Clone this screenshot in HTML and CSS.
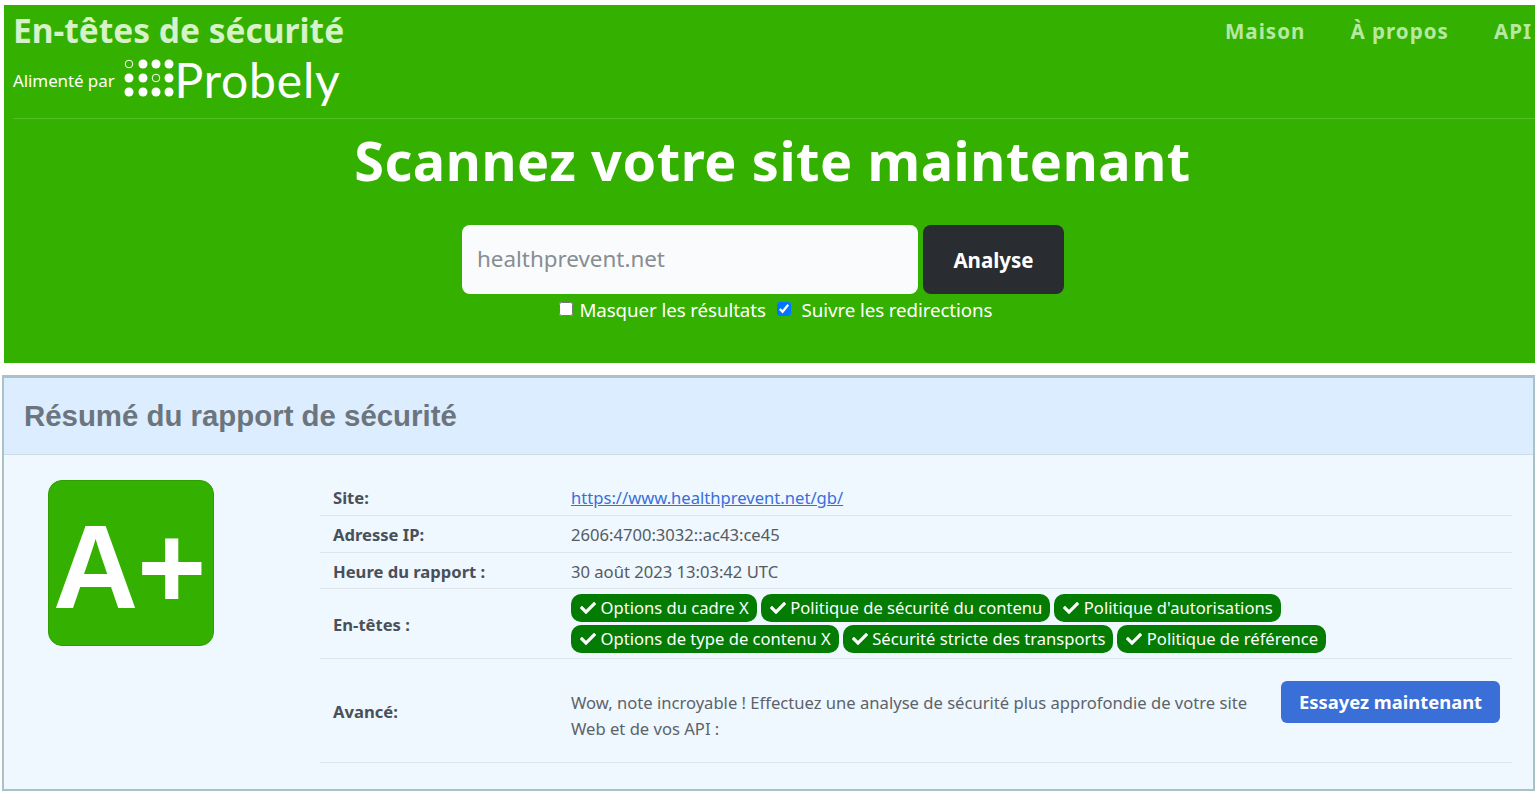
FILE: index.html
```html
<!DOCTYPE html>
<html lang="fr">
<head>
<meta charset="utf-8">
<title>En-têtes de sécurité</title>
<link rel="stylesheet" href="styles.css">
</head>
<body>
<header class="hero">
  <div class="topbar">
    <div class="brand">
      <div class="brand-title">En-têtes de sécurité</div>
      <div class="brand-sub">
        <span class="powered">Alimenté par</span>
        <svg class="dots" viewBox="0 0 50 38" width="50" height="38" aria-hidden="true">
          <g fill="#fff">
            <circle cx="19" cy="5" r="4.5"/><circle cx="32" cy="5" r="4.5"/><circle cx="45" cy="5" r="4.5"/>
            <circle cx="5" cy="19" r="4.5"/><circle cx="19" cy="19" r="4.5"/><circle cx="45" cy="19" r="4.5"/>
            <circle cx="5" cy="33" r="4.5"/><circle cx="19" cy="33" r="4.5"/><circle cx="32" cy="33" r="4.5"/><circle cx="45" cy="33" r="4.5"/>
          </g>
          <g fill="none" stroke="#fff" stroke-width="1">
            <circle cx="5" cy="5" r="3.8"/><circle cx="32" cy="19" r="3.8"/>
          </g>
        </svg>
        <span class="probely">Probely</span>
      </div>
    </div>
    <nav class="nav">
      <a href="#">Maison</a>
      <a href="#">À propos</a>
      <a href="#">API</a>
    </nav>
  </div>
  <h1 class="headline">Scannez votre site maintenant</h1>
  <form class="scan">
    <div class="scan-row">
      <input class="scan-input" type="text" placeholder="healthprevent.net">
      <button class="scan-btn" type="button">Analyse</button>
    </div>
    <div class="scan-opts">
      <label class="opt"><input type="checkbox"> Masquer les résultats</label>
      <label class="opt opt-follow"><input type="checkbox" checked> Suivre les redirections</label>
    </div>
  </form>
</header>

<section class="card">
  <h2 class="card-head">Résumé du rapport de sécurité</h2>
  <div class="card-body">
    <div class="grade-col">
      <div class="grade">A+</div>
    </div>
    <table class="info">
      <tr class="row-site"><th>Site:</th><td><a href="#">https://www.healthprevent.net/gb/</a></td></tr>
      <tr class="row-ip"><th>Adresse IP:</th><td>2606:4700:3032::ac43:ce45</td></tr>
      <tr class="row-time"><th>Heure du rapport :</th><td>30 août 2023 13:03:42 UTC</td></tr>
      <tr class="row-pills"><th>En-têtes :</th><td>
        <div class="pills">
          <span class="pill"><svg class="tick" viewBox="0 0 512 512"><path d="M173.898 439.404l-166.4-166.4c-9.997-9.997-9.997-26.206 0-36.204l36.203-36.204c9.997-9.998 26.207-9.998 36.204 0L192 312.69 432.095 72.596c9.997-9.997 26.207-9.997 36.204 0l36.203 36.204c9.997 9.997 9.997 26.206 0 36.204l-294.4 294.401c-9.998 9.997-26.207 9.997-36.204-.001z"/></svg>Options du cadre X</span>
          <span class="pill"><svg class="tick" viewBox="0 0 512 512"><path d="M173.898 439.404l-166.4-166.4c-9.997-9.997-9.997-26.206 0-36.204l36.203-36.204c9.997-9.998 26.207-9.998 36.204 0L192 312.69 432.095 72.596c9.997-9.997 26.207-9.997 36.204 0l36.203 36.204c9.997 9.997 9.997 26.206 0 36.204l-294.4 294.401c-9.998 9.997-26.207 9.997-36.204-.001z"/></svg>Politique de sécurité du contenu</span>
          <span class="pill"><svg class="tick" viewBox="0 0 512 512"><path d="M173.898 439.404l-166.4-166.4c-9.997-9.997-9.997-26.206 0-36.204l36.203-36.204c9.997-9.998 26.207-9.998 36.204 0L192 312.69 432.095 72.596c9.997-9.997 26.207-9.997 36.204 0l36.203 36.204c9.997 9.997 9.997 26.206 0 36.204l-294.4 294.401c-9.998 9.997-26.207 9.997-36.204-.001z"/></svg>Politique d'autorisations</span>
          <span class="pill"><svg class="tick" viewBox="0 0 512 512"><path d="M173.898 439.404l-166.4-166.4c-9.997-9.997-9.997-26.206 0-36.204l36.203-36.204c9.997-9.998 26.207-9.998 36.204 0L192 312.69 432.095 72.596c9.997-9.997 26.207-9.997 36.204 0l36.203 36.204c9.997 9.997 9.997 26.206 0 36.204l-294.4 294.401c-9.998 9.997-26.207 9.997-36.204-.001z"/></svg>Options de type de contenu X</span>
          <span class="pill"><svg class="tick" viewBox="0 0 512 512"><path d="M173.898 439.404l-166.4-166.4c-9.997-9.997-9.997-26.206 0-36.204l36.203-36.204c9.997-9.998 26.207-9.998 36.204 0L192 312.69 432.095 72.596c9.997-9.997 26.207-9.997 36.204 0l36.203 36.204c9.997 9.997 9.997 26.206 0 36.204l-294.4 294.401c-9.998 9.997-26.207 9.997-36.204-.001z"/></svg>Sécurité stricte des transports</span>
          <span class="pill"><svg class="tick" viewBox="0 0 512 512"><path d="M173.898 439.404l-166.4-166.4c-9.997-9.997-9.997-26.206 0-36.204l36.203-36.204c9.997-9.998 26.207-9.998 36.204 0L192 312.69 432.095 72.596c9.997-9.997 26.207-9.997 36.204 0l36.203 36.204c9.997 9.997 9.997 26.206 0 36.204l-294.4 294.401c-9.998 9.997-26.207 9.997-36.204-.001z"/></svg>Politique de référence</span>
        </div>
      </td></tr>
      <tr class="row-adv"><th>Avancé:</th><td>
        <div class="adv">
          <p class="adv-text">Wow, note incroyable ! Effectuez une analyse de sécurité plus approfondie de votre site Web et de vos API :</p>
          <a class="try" href="#">Essayez maintenant</a>
        </div>
      </td></tr>
    </table>
  </div>
</section>
</body>
</html>
```
FILE: styles.css
```css
* { box-sizing: border-box; }
html, body { margin: 0; height: 793px; overflow: hidden; }
body {
  padding: 5px 5px 0 2px;
  background: #fff;
  font-family: "Noto Sans", sans-serif;
  font-size: 16.6px;
  color: #555b62;
}
.hero {
  margin-left: 2px;
  width: 1531px;
  height: 358px;
  background: #34b000;
  padding: 0 0 0 9px;
}
.topbar {
  display: flex;
  justify-content: space-between;
  height: 114px;
  border-bottom: 1px solid #54bd2a;
}
.brand-title {
  font-size: 33.5px;
  font-weight: 700;
  line-height: 50px;
  color: #d6f2c9;
}
.brand-sub {
  display: flex;
  align-items: center;
  height: 50px;
}
.powered {
  font-size: 17px;
  color: #fff;
  margin-right: 9px;
  letter-spacing: -0.1px;
}
.dots { flex: none; margin-top: -5px; }
.probely {
  font-family: "Lato", sans-serif;
  font-weight: 400;
  font-size: 48px;
  line-height: 50px;
  color: #fff;
  margin-left: 1px;
  margin-top: -1px;
  letter-spacing: 0.8px;
}
.nav {
  display: flex;
  gap: 45px;
  padding: 10px 3px 0 0;
  align-items: flex-start;
}
.nav a {
  font-size: 20.6px;
  font-weight: 700;
  line-height: 32px;
  letter-spacing: 1px;
  text-decoration: none;
  color: #b6e8a1;
}
.headline {
  margin: 9px 0 0;
  text-align: center;
  font-size: 54px;
  line-height: 64px;
  font-weight: 700;
  letter-spacing: 0.55px;
  color: #fff;
  padding-right: 3px;
}
.scan { margin-top: 33px; }
.scan-row {
  display: flex;
  justify-content: center;
  gap: 5px;
  padding-right: 22px;
}
.scan-input {
  width: 456px;
  height: 69px;
  border: 0;
  border-radius: 8px;
  background: #fafbfc;
  padding: 0 15px 3px;
  font: 400 22.4px "Noto Sans", sans-serif;
  color: #6c757d;
}
.scan-input::placeholder { color: #878d93; opacity: 1; }
.scan-btn {
  width: 141px;
  height: 69px;
  border: 0;
  border-radius: 8px;
  background: #292c30;
  color: #fff;
  padding-bottom: 1px;
  font: 700 20.5px "Noto Sans", sans-serif;
}
.scan-opts {
  display: flex;
  justify-content: center;
  gap: 11px;
  margin-top: 1px;
  padding-left: 3px;
  color: #fff;
  font-size: 18.75px;
  line-height: 30px;
  letter-spacing: -0.1px;
}
.opt input {
  width: 14px;
  height: 14px;
  margin: 0 2px 0 0;
  position: relative;
  top: -1px;
}
.opt-follow input { margin-right: 6px; }
.card {
  margin-top: 12px;
  width: 1533px;
  height: 416px;
  border: 2px solid #a9c1c9;
  border-top-width: 3px;
  background: #eff7ff;
}
.card-head {
  margin: 0;
  height: 77px;
  padding: 0 20px;
  background: #dbedff;
  border-bottom: 1px solid #cddbe6;
  font-family: "Liberation Sans", sans-serif;
  font-size: 29.4px;
  font-weight: 700;
  line-height: 75px;
  color: #6c757d;
}
.card-body {
  display: flex;
  padding: 0 21px 0 0;
}
.grade-col {
  flex: none;
  width: 316px;
  padding: 25px 0 0 44px;
}
.grade {
  width: 166px;
  height: 166px;
  background: #34b000;
  border: 1px solid #2e9e02;
  border-radius: 14px;
  color: #fff;
  font-family: "Liberation Sans", sans-serif;
  font-weight: 700;
  font-size: 118px;
  line-height: 173px;
  text-align: center;
  letter-spacing: -1px;
  white-space: nowrap;
  padding-right: 4px;
}
.info {
  flex: 1;
  border-collapse: collapse;
  margin-top: 25px;
  align-self: flex-start;
  line-height: 26px;
}
.info th, .info td {
  border-bottom: 1px solid #dde5ea;
  padding: 2px 0 0;
  vertical-align: middle;
  text-align: left;
}
.info th {
  width: 251px;
  padding-left: 13px;
  font-weight: 700;
  color: #495057;
}
.row-site th, .row-site td { height: 35px; }
.row-ip th, .row-ip td { height: 37px; }
.row-time th, .row-time td { height: 36px; }
.row-pills th, .row-pills td { height: 70px; }
.row-adv th, .row-adv td { height: 104px; }
.info .row-time th, .info .row-time td { padding-top: 3px; }
.info .row-pills th { padding-top: 4px; }
.info .row-adv th { padding-top: 3px; }
.info .row-pills td { padding-top: 0; }
.info .row-adv td { padding-top: 0; }
.info a { color: #3a6fd8; }
.pills {
  display: flex;
  flex-wrap: wrap;
  gap: 3px 4px;
  padding-top: 1px;
}
.pill {
  display: inline-flex;
  align-items: center;
  height: 28px;
  padding: 0 8px 0 9px;
  background: #047c04;
  color: #fff;
  border-radius: 10px;
  white-space: nowrap;
}
.tick {
  width: 16px;
  height: 16px;
  margin-right: 4.5px;
  fill: #fff;
}
.adv {
  display: flex;
  align-items: flex-start;
  justify-content: space-between;
  padding-right: 12px;
  margin-top: 2px;
}
.adv-text {
  margin: 9px 0 0;
  width: 690px;
  flex: none;
  color: #5c6369;
}
.info a.try {
  flex: none;
  width: 219px;
  height: 42px;
  background: #3a6fd8;
  color: #fff;
  border-radius: 6px;
  font-size: 18.4px;
  font-weight: 700;
  line-height: 42px;
  text-align: center;
  text-decoration: none;
}
```
